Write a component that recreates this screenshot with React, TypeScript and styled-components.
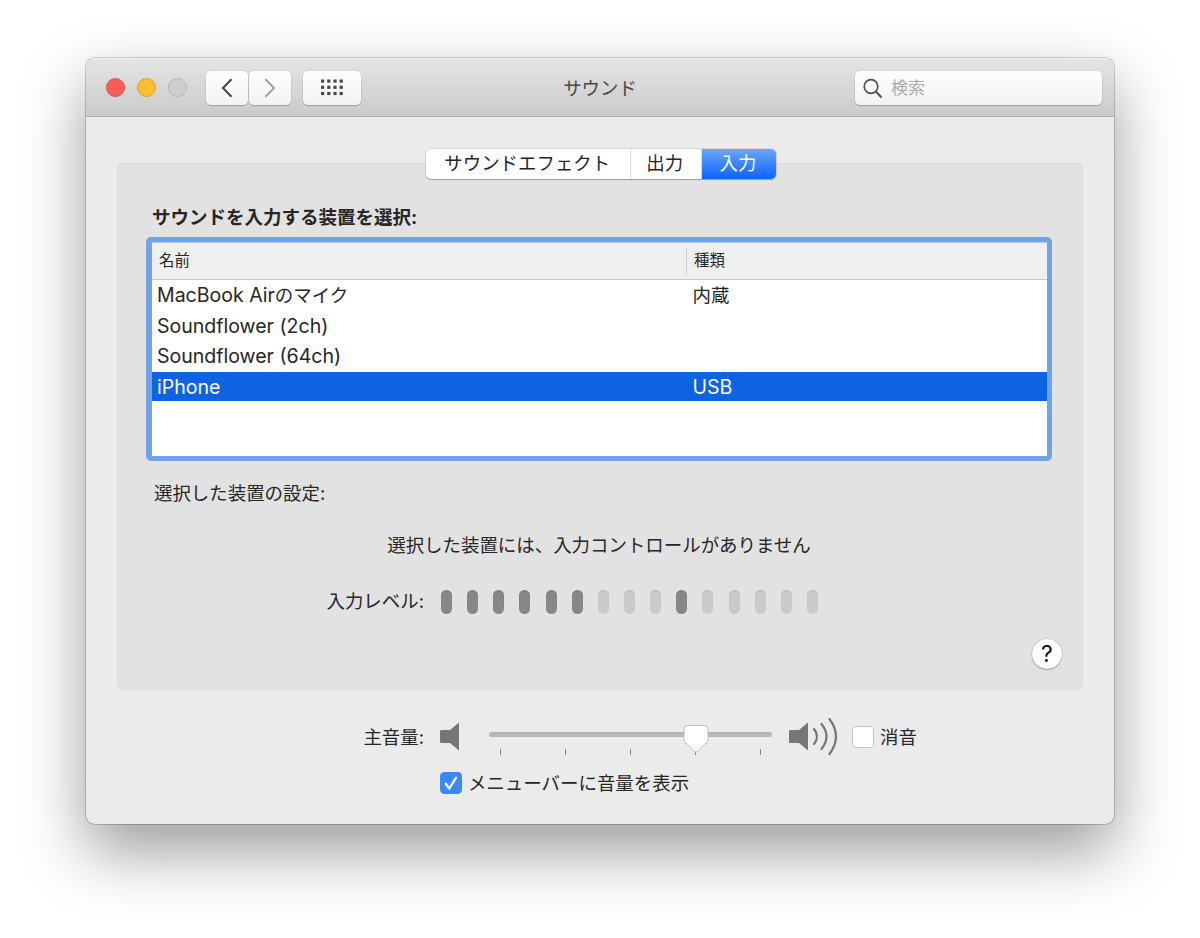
import React from 'react';
import styled, { createGlobalStyle, css } from 'styled-components';

const Global = createGlobalStyle`
  * { box-sizing: border-box; }
  body {
    margin: 0;
    background: #fff;
    color: #262626;
    font-family: Inter, "Noto Sans CJK JP", sans-serif;
    font-size: 18.45px;
    line-height: 24px;
    white-space: nowrap;
  }
`;

const Desktop = styled.div`
  width: 1200px;
  height: 938px;
  padding: 58px 86px;
  overflow: hidden;
`;

const Window = styled.main`
  width: 1028px;
  height: 766px;
  border-radius: 9px;
  background: #ebebeb;
  overflow: hidden;
  box-shadow: 0 0 0 1px rgba(0, 0, 0, 0.18), 0 27px 64px rgba(0, 0, 0, 0.4);
`;

const TitleBar = styled.header`
  display: grid;
  grid-template-columns: 1fr auto 1fr;
  align-items: center;
  height: 59px;
  padding: 1px 12px 0 20px;
  background: linear-gradient(#e5e5e5, #cacaca);
  border-bottom: 1px solid #adadad;
  box-shadow: inset 0 1px 0 #f4f4f4;
`;

const Controls = styled.div`
  display: flex;
  align-items: center;
`;

const Light = styled.span<{ $fill: string; $edge: string }>`
  width: 19px;
  height: 19px;
  margin-right: 12px;
  border-radius: 50%;
  background: ${(p) => p.$fill};
  border: 1px solid ${(p) => p.$edge};
`;

const ToolButton = styled.button<{ $w: number; $gap: number }>`
  display: flex;
  align-items: center;
  justify-content: center;
  width: ${(p) => p.$w}px;
  height: 34px;
  margin: 0 0 0 ${(p) => p.$gap}px;
  padding: 0;
  border: 0;
  border-radius: 5px;
  background: linear-gradient(#fefefe, #f3f3f3);
  box-shadow: 0 0 0 0.5px rgba(0, 0, 0, 0.08), 0 1px 1px rgba(0, 0, 0, 0.2);
`;

const Title = styled.h1`
  margin: 0 8px 0 0;
  font-size: 18.4px;
  font-weight: 400;
  color: #484848;
`;

const Search = styled.div`
  justify-self: end;
  display: flex;
  align-items: center;
  gap: 8px;
  width: 247px;
  height: 34px;
  padding-left: 8px;
  border-radius: 5px;
  background: linear-gradient(#fefefe, #f3f3f3);
  box-shadow: 0 0 0 0.5px rgba(0, 0, 0, 0.08), 0 1px 1px rgba(0, 0, 0, 0.2);
  color: #ababab;
  font-size: 17px;
`;

const Body = styled.div`
  display: flex;
  flex-direction: column;
  padding: 32px 31px 0;
`;

const Tabs = styled.div`
  position: relative;
  display: flex;
  align-self: center;
  width: 350px;
  height: 30px;
  margin-left: 2px;
  border-radius: 5px;
  background: #fff;
  box-shadow: 0 0 0 0.5px rgba(0, 0, 0, 0.16), 0 1px 1px rgba(0, 0, 0, 0.25);
`;

const Tab = styled.div<{ $w: number; $active?: boolean }>`
  width: ${(p) => p.$w}px;
  line-height: 29px;
  text-align: center;
  padding-right: 1px;
  ${(p) =>
    p.$active
      ? css`
          padding-right: 5px;
          color: #fff;
          background: linear-gradient(#6ca6f8, #0a64fd);
          border-radius: 0 5px 5px 0;
        `
      : css`
          & + & {
            border-left: 1px solid #dadada;
            padding-right: 2px;
          }
        `}
`;

const Panel = styled.section`
  display: flex;
  flex-direction: column;
  height: 527px;
  margin-top: -16px;
  padding: 41px 30px 0 28px;
  border: 1px solid #dadada;
  border-radius: 6px;
  background: #e2e2e2;
`;

const Heading = styled.h2`
  margin: 0 0 8px 6px;
  font-size: 18.5px;
  line-height: 24px;
  font-weight: 700;
`;

const Table = styled.div`
  height: 224px;
  border: 5px solid #73a3e7;
  border-left-width: 6px;
  border-radius: 5px;
  background: #fff;
`;

const TableHead = styled.div`
  display: flex;
  align-items: center;
  height: 38px;
  background: #efefef;
  border-bottom: 1px solid #c8c8c8;
  border-top: 1px solid #b9c6da;
  font-size: 15.4px;
`;

const HeadCell = styled.div<{ $w: number; $divided?: boolean }>`
  width: ${(p) => p.$w}px;
  height: 26px;
  line-height: 26px;
  padding-left: 7px;
  border-left: ${(p) => (p.$divided ? '1px solid #d0d0d0' : '0')};
`;

const Row = styled.div<{ $selected?: boolean }>`
  display: flex;
  height: ${(p) => (p.$selected ? 29 : 30.667)}px;
  line-height: 30px;
  padding-left: 5px;
  ${(p) => p.$selected && 'background: #0d63e1; color: #fff;'}
`;

const NameCell = styled.div`
  width: 535.5px;
`;

const Latin = styled.span`
  font-size: 19.55px;
`;

const SettingsLabel = styled.p`
  margin: 20px 0 0 8px;
`;

const Notice = styled.p`
  margin: 28px 0 0;
  text-align: center;
`;

const LevelRow = styled.div`
  display: flex;
  align-items: center;
  margin-top: 30px;
`;

const LevelLabel = styled.div`
  width: 278px;
  text-align: right;
`;

const Meter = styled.div`
  display: flex;
  justify-content: space-between;
  width: 377px;
  margin: 3px 0 0 17px;
`;

const Bar = styled.span<{ $on: boolean }>`
  width: 11px;
  height: 24px;
  border-radius: 5.5px;
  background: ${(p) => (p.$on ? '#878787' : '#cacaca')};
  box-shadow: inset 0 1px 1px rgba(0, 0, 0, 0.1);
`;

const Help = styled.button`
  align-self: flex-end;
  width: 30px;
  height: 30px;
  margin: 25px -10px 0 0;
  padding: 0;
  border: 0;
  border-radius: 50%;
  background: #fff;
  box-shadow: 0 0 0 0.5px rgba(0, 0, 0, 0.16), 0 1px 1.5px rgba(0, 0, 0, 0.25);
  font: 400 23px/30px Inter, sans-serif;
  color: #111;
`;

const VolumeRow = styled.div`
  display: flex;
  align-items: center;
  height: 44px;
  margin-top: 25px;
`;

const VolumeLabel = styled.div`
  width: 307px;
  text-align: right;
  margin-right: 16px;
`;

const Slider = styled.div`
  position: relative;
  width: 283px;
  height: 44px;
  margin: 0 17px 0 29px;
  padding-top: 17px;
`;

const Track = styled.div`
  height: 5px;
  border-radius: 2.5px;
  background: #b8b8b8;
  box-shadow: inset 0 1px 0 rgba(0, 0, 0, 0.05);
`;

const Ticks = styled.div`
  display: flex;
  justify-content: space-between;
  padding: 12px 11px 0;
`;

const Tick = styled.span`
  width: 1px;
  height: 6px;
  background: #808080;
`;

const Thumb = styled.svg`
  position: absolute;
  left: 194px;
  top: 9px;
`;

const Check = styled.span<{ $on?: boolean; $gap?: number }>`
  display: flex;
  width: 22px;
  height: 22px;
  margin-left: ${(p) => p.$gap ?? 0}px;
  border-radius: 4.5px;
  background: ${(p) => (p.$on ? '#3b87fd' : '#fff')};
  box-shadow: ${(p) => (p.$on ? 'none' : 'inset 0 0 0 1px #c3c3c3')};
`;

const MuteLabel = styled.span`
  margin-left: 6px;
`;

const MenuRow = styled.div`
  display: flex;
  align-items: center;
  height: 24px;
  margin: 12px 0 0 323px;
`;

const MenuLabel = styled.span`
  margin: -1px 0 0 6px;
`;

const Chevron = ({ flip, color }: { flip?: boolean; color: string }) => (
  <svg width="12" height="20" viewBox="0 0 12 20" fill="none" stroke={color} strokeWidth="2">
    <path d={flip ? 'M1.5 1.2 10 10 1.5 18.8' : 'M10.5 1.2 2 10l8.5 8.8'} />
  </svg>
);

const GridIcon = () => (
  <svg width="24" height="17" viewBox="0 0 24 17" fill="#484848">
    {[0, 6.2, 12.4, 18.6].map((x) =>
      [0.5, 6.7, 12.9].map((y) => <rect key={`${x}-${y}`} x={x + 1} y={y} width="3.2" height="3.2" />),
    )}
  </svg>
);

const speakerPath = 'M1.5 11H10l9-7.5v28L10 24H1.5Q0 24 0 22.5v-10Q0 11 1.5 11Z';

const devices = [
  { latin: 'MacBook Air', rest: 'のマイク', kind: '内蔵' },
  { latin: 'Soundflower (2ch)' },
  { latin: 'Soundflower (64ch)' },
  { latin: 'iPhone', kindLatin: 'USB', selected: true },
];

const levels = [1, 1, 1, 1, 1, 1, 0, 0, 0, 1, 0, 0, 0, 0, 0];

export default function App() {
  return (
    <Desktop>
      <Global />
      <Window>
        <TitleBar>
          <Controls>
            <Light $fill="#fc5d57" $edge="#e2504a" />
            <Light $fill="#fdbd2e" $edge="#dfa023" />
            <Light $fill="#cfcfcf" $edge="#b6b6b6" />
            <ToolButton $w={42} $gap={7}>
              <Chevron color="#444" />
            </ToolButton>
            <ToolButton $w={42} $gap={1}>
              <Chevron flip color="#a2a2a2" />
            </ToolButton>
            <ToolButton $w={58} $gap={12}>
              <GridIcon />
            </ToolButton>
          </Controls>
          <Title>サウンド</Title>
          <Search>
            <svg width="20" height="22" viewBox="0 0 20 22" fill="none" stroke="#505050" strokeWidth="1.7">
              <circle cx="8" cy="9.5" r="6.8" />
              <path d="m12.8 14.5 5.7 6" strokeWidth="2" />
            </svg>
            検索
          </Search>
        </TitleBar>

        <Body>
          <Tabs>
            <Tab $w={203.5}>サウンドエフェクト</Tab>
            <Tab $w={71.5}>出力</Tab>
            <Tab $w={75} $active>
              入力
            </Tab>
          </Tabs>

          <Panel>
            <Heading>サウンドを入力する装置を選択:</Heading>
            <Table>
              <TableHead>
                <HeadCell $w={534}>名前</HeadCell>
                <HeadCell $w={300} $divided>
                  種類
                </HeadCell>
              </TableHead>
              {devices.map((d) => (
                <Row key={d.latin} $selected={d.selected}>
                  <NameCell>
                    <Latin>{d.latin}</Latin>
                    {d.rest}
                  </NameCell>
                  {d.kind}
                  {d.kindLatin && <Latin>{d.kindLatin}</Latin>}
                </Row>
              ))}
            </Table>
            <SettingsLabel>選択した装置の設定:</SettingsLabel>
            <Notice>選択した装置には、入力コントロールがありません</Notice>
            <LevelRow>
              <LevelLabel>入力レベル:</LevelLabel>
              <Meter>
                {levels.map((on, i) => (
                  <Bar key={i} $on={!!on} />
                ))}
              </Meter>
            </LevelRow>
            <Help>?</Help>
          </Panel>

          <VolumeRow>
            <VolumeLabel>主音量:</VolumeLabel>
            <svg width="20" height="36" viewBox="0 0 20 36" fill="#767676">
              <path d={speakerPath} />
            </svg>
            <Slider>
              <Track />
              <Ticks>
                {[0, 1, 2, 3, 4].map((t) => (
                  <Tick key={t} />
                ))}
              </Ticks>
              <Thumb width="26" height="30" viewBox="0 0 26 30">
                <path
                  d="M4.5 1.5h17Q25 1.5 25 5v10.5Q25 17 24 18L14.2 27.6Q13 28.6 11.8 27.6L2 18Q1 17 1 15.5V5Q1 1.5 4.5 1.5Z"
                  fill="#fff"
                  stroke="#bdbdbd"
                />
              </Thumb>
            </Slider>
            <svg width="49" height="38" viewBox="0 -1 49 38" fill="#767676">
              <path d={speakerPath} />
              <g fill="none" stroke="#767676" strokeWidth="2.2" strokeLinecap="round">
                <path d="M25 10q6 7.5 0 15" />
                <path d="M32.5 5q10 12.5 0 25" />
                <path d="M40.5 0q13 17.5 0 35" />
              </g>
            </svg>
            <Check $gap={14} />
            <MuteLabel>消音</MuteLabel>
          </VolumeRow>
          <MenuRow>
            <Check $on>
              <svg
                width="22"
                height="22"
                viewBox="0 0 22 22"
                fill="none"
                stroke="#fff"
                strokeWidth="2.3"
                strokeLinecap="round"
                strokeLinejoin="round"
              >
                <path d="m5.7 11.8 3.6 4.7 6.8-10.8" />
              </svg>
            </Check>
            <MenuLabel>メニューバーに音量を表示</MenuLabel>
          </MenuRow>
        </Body>
      </Window>
    </Desktop>
  );
}
